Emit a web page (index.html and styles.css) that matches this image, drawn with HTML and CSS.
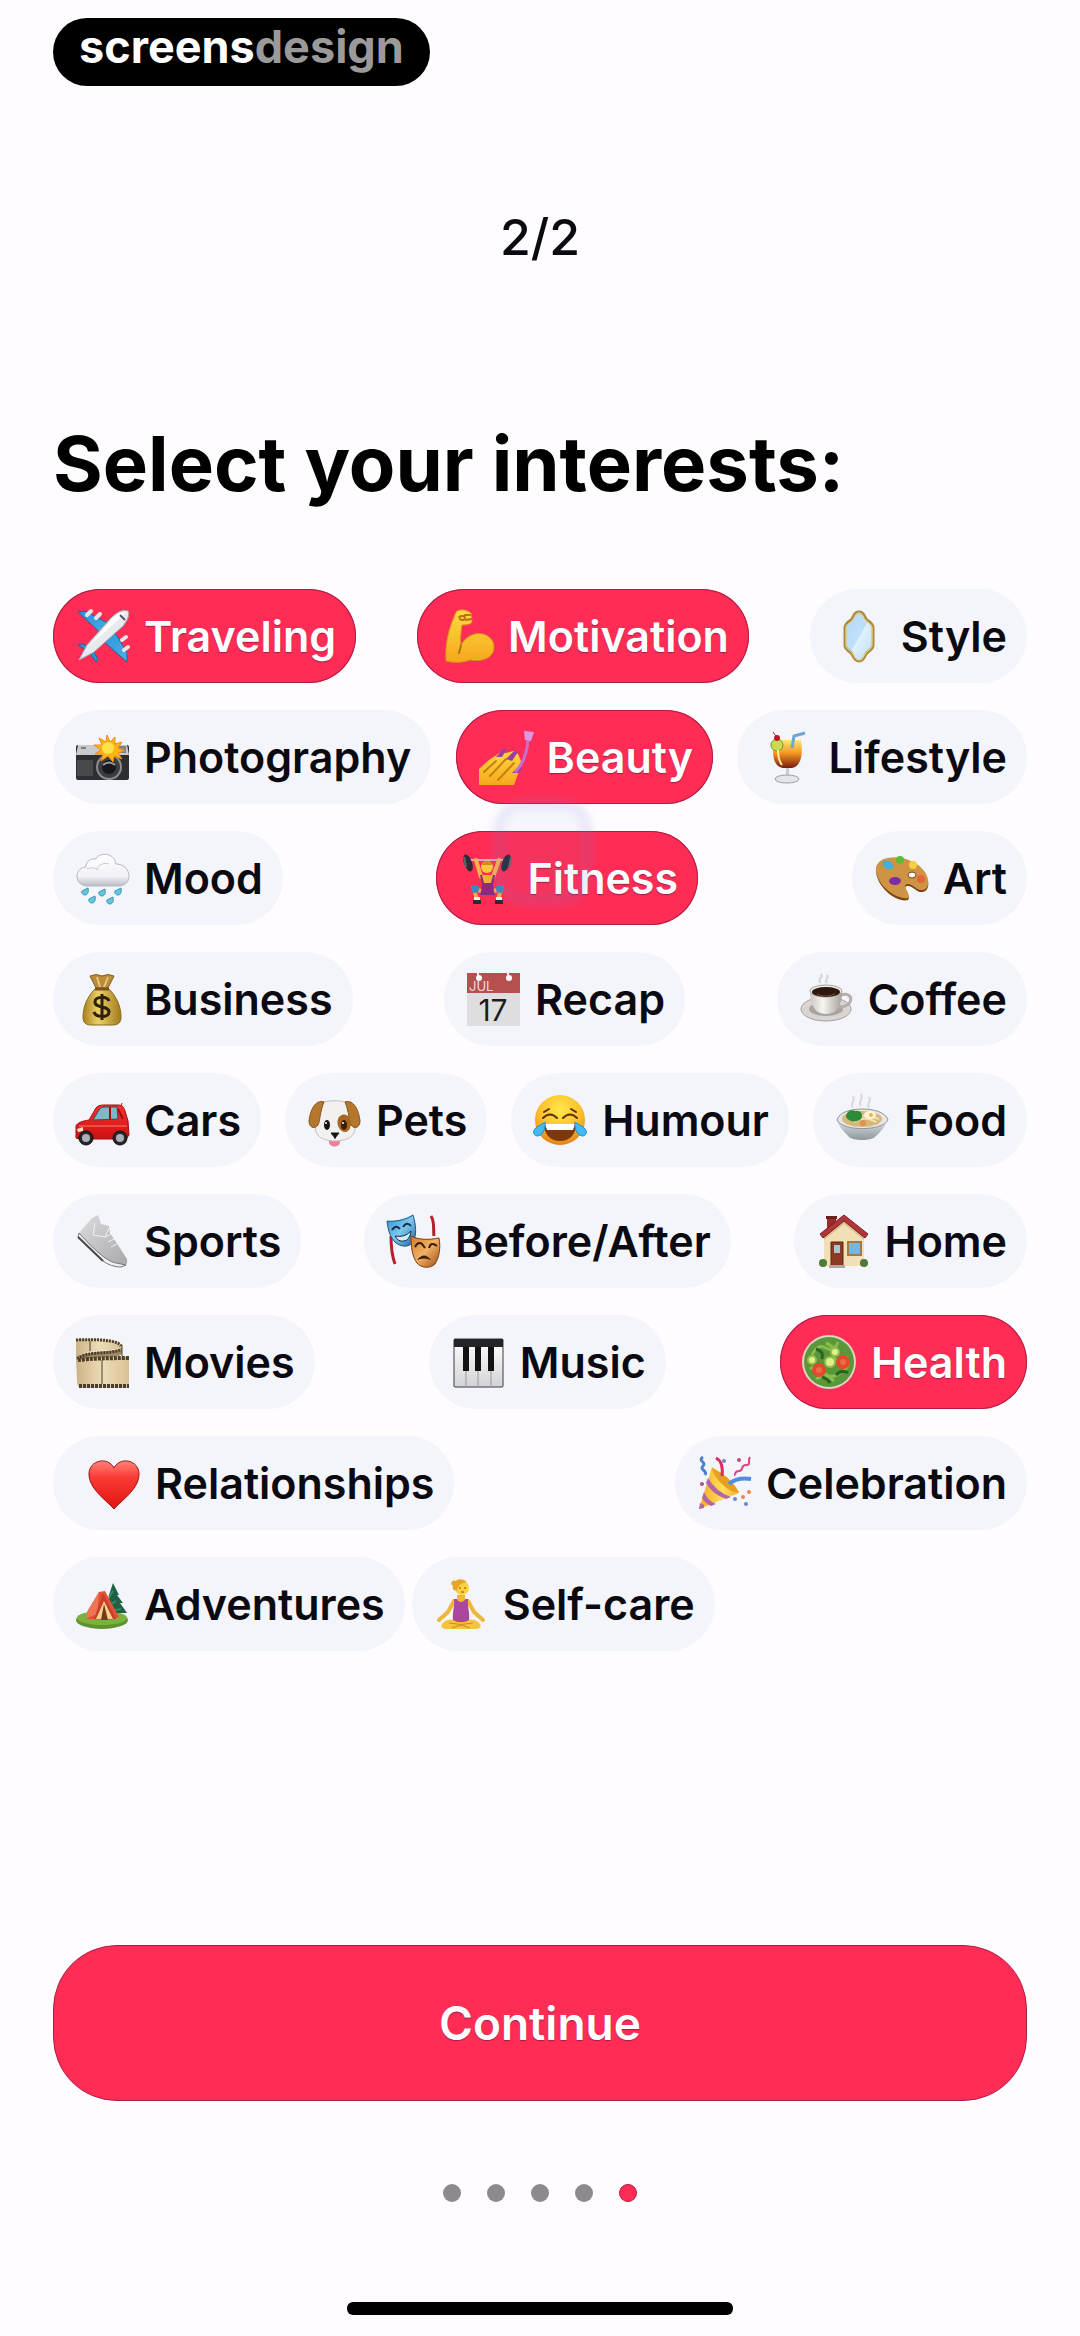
FILE: index.html
```html
<!DOCTYPE html>
<html lang="en">
<head>
<meta charset="utf-8">
<meta name="viewport" content="width=device-width, initial-scale=1">
<title>Select your interests</title>
<link rel="stylesheet" href="styles.css">
</head>
<body>
<svg class="defs" width="0" height="0" aria-hidden="true">
  <defs>
    <linearGradient id="skin" x1="0" y1="0" x2="0" y2="1"><stop offset="0" stop-color="#ffd93f"/><stop offset="1" stop-color="#f5a81c"/></linearGradient>
    <linearGradient id="blue" x1="0" y1="0" x2="1" y2="1"><stop offset="0" stop-color="#2f8fd0"/><stop offset="1" stop-color="#46b4ee"/></linearGradient>
    <linearGradient id="glass" x1="0" y1="0" x2="1" y2="1"><stop offset="0" stop-color="#b4d8f6"/><stop offset=".5" stop-color="#bfe0f9"/><stop offset=".52" stop-color="#e1f1fd"/><stop offset="1" stop-color="#b9dcf7"/></linearGradient>
    <linearGradient id="cloud" x1="0" y1="0" x2="0" y2="1"><stop offset="0" stop-color="#ffffff"/><stop offset=".7" stop-color="#f1f1f6"/><stop offset="1" stop-color="#b9bac6"/></linearGradient>
    <linearGradient id="drink" x1="0" y1="0" x2="0" y2="1"><stop offset="0" stop-color="#ffe873"/><stop offset=".45" stop-color="#f79a24"/><stop offset="1" stop-color="#7a1c10"/></linearGradient>
    <linearGradient id="gold" x1="0" y1="0" x2="1" y2="0"><stop offset="0" stop-color="#a8801f"/><stop offset=".4" stop-color="#ecd067"/><stop offset="1" stop-color="#a07a1c"/></linearGradient>
    <linearGradient id="china" x1="0" y1="0" x2="1" y2="0"><stop offset="0" stop-color="#c9c5c0"/><stop offset=".4" stop-color="#f7f5f2"/><stop offset="1" stop-color="#a5a09b"/></linearGradient>
    <linearGradient id="bowl" x1="0" y1="0" x2="0" y2="1"><stop offset="0" stop-color="#dadfe2"/><stop offset="1" stop-color="#8d979d"/></linearGradient>
    <linearGradient id="car" x1="0" y1="0" x2="0" y2="1"><stop offset="0" stop-color="#f4332f"/><stop offset="1" stop-color="#cf0f12"/></linearGradient>
    <radialGradient id="face" cx=".5" cy=".3" r=".7"><stop offset="0" stop-color="#ffe74a"/><stop offset=".6" stop-color="#fcc02a"/><stop offset="1" stop-color="#e2811a"/></radialGradient>
    <linearGradient id="shoe" x1="0" y1="0" x2="1" y2="1"><stop offset="0" stop-color="#dcdbdd"/><stop offset="1" stop-color="#a8a7a9"/></linearGradient>
    <linearGradient id="maskblue" x1="0" y1="0" x2="1" y2="1"><stop offset="0" stop-color="#2f8ed0"/><stop offset=".5" stop-color="#7cc8ee"/><stop offset="1" stop-color="#1d5f9c"/></linearGradient>
    <linearGradient id="maskgold" x1="0" y1="0" x2="1" y2="1"><stop offset="0" stop-color="#d07b2c"/><stop offset=".5" stop-color="#f1b165"/><stop offset="1" stop-color="#9a4a12"/></linearGradient>
    <linearGradient id="film" x1="0" y1="0" x2="1" y2="0"><stop offset="0" stop-color="#cdb285"/><stop offset=".5" stop-color="#eddcb8"/><stop offset="1" stop-color="#d9c193"/></linearGradient>
    <linearGradient id="heart" x1="0" y1="0" x2="0" y2="1"><stop offset="0" stop-color="#ff8477"/><stop offset=".35" stop-color="#fb3a34"/><stop offset="1" stop-color="#e0140f"/></linearGradient>
    <linearGradient id="keys" x1="0" y1="0" x2="0" y2="1"><stop offset="0" stop-color="#ffffff"/><stop offset="1" stop-color="#d3d3d5"/></linearGradient>
    <linearGradient id="cone" x1="0" y1="0" x2="1" y2="0"><stop offset="0" stop-color="#f4a728"/><stop offset=".6" stop-color="#ffe05a"/><stop offset="1" stop-color="#f0b12c"/></linearGradient>
  </defs>
</svg>

<header class="topbar">
  <div class="brand">screens<span class="brand-soft">design</span></div>
</header>

<main class="page">
  <p class="step">2/2</p>
  <h1 class="title">Select your interests:</h1>

  <div class="interests" role="group" aria-label="Interests">
    <div class="row">
      <button class="chip" type="button" aria-pressed="true">
        <svg class="icon" viewBox="0 0 54 54" aria-hidden="true">
          <path d="M3 3l7-1 26 14-6 12z" fill="url(#blue)" stroke="#20689b"/>
          <path d="M38 20l14 24 0 9-25-22z" fill="url(#blue)" stroke="#20689b"/>
          <path d="M3 36l4-1 12 4-4 5zM16 38l7 12-2 3-7-10z" fill="#2f8fd0" stroke="#20689b"/>
          <path d="M12 6l4-4M21 9l4-4M47 31l4-3M49 41l4-3" stroke="#e4e6ea" stroke-width="4" stroke-linecap="round"/>
          <path d="M53 2c2 4-1 10-5 15L19 43 4 51l8-15L36 9c6-6 12-9 17-7z" fill="#e9eaee" stroke="#a6a9b0"/>
          <path d="M50 4c-5-1-10 3-14 7L15 36 40 14z" fill="#fff"/>
          <path d="M45 6l5 5" stroke="#4f565f" stroke-width="2"/>
        </svg>
        <span>Traveling</span>
      </button>
      <button class="chip" type="button" aria-pressed="true">
        <svg class="icon" viewBox="0 0 54 54" aria-hidden="true">
          <path d="M7 52C6 36 9 24 13 13l4-10c3-3 10-3 15 1l1 9c-1 3-8 3-10 3-1 8-2 14-1 20 5-9 14-13 22-11 8 2 11 8 11 13 0 12-14 15-24 13-8 3-17 3-24 1z" fill="url(#skin)" stroke="#d98d16"/>
          <path d="M22 36c-1 4-1 5-2 8M20 8c3-2 6-1 6 1s-3 3-5 1M31 6l-5 0M32 10l-5 1" fill="none" stroke="#b87012" stroke-width="2" stroke-linecap="round"/>
        </svg>
        <span>Motivation</span>
      </button>
      <button class="chip" type="button" aria-pressed="false">
        <svg class="icon" viewBox="0 0 54 54" aria-hidden="true">
          <path d="M27 3c5 0 5 4 7 7 3 3 7 4 7 9v17c0 5-4 5-7 9-2 3-2 7-7 7s-5-4-7-7c-3-4-7-4-7-9V19c0-5 4-6 7-9 2-3 2-7 7-7z" fill="url(#glass)" stroke="#a98c3c" stroke-width="3"/>
          <path d="M27 4c4 0 4 4 6 7 3 3 7 4 7 8v17c0 4-4 5-7 9-2 3-2 6-6 6s-4-3-6-6c-3-4-7-5-7-9V19c0-4 4-5 7-8 2-3 2-7 6-7z" fill="none" stroke="#f7e29a" stroke-width="1"/>
        </svg>
        <span>Style</span>
      </button>
    </div>

    <div class="row">
      <button class="chip" type="button" aria-pressed="false">
        <svg class="icon" viewBox="0 0 54 54" aria-hidden="true">
          <rect x="1" y="15" width="53" height="35" rx="2" fill="#2d2e31"/>
          <path d="M3 15h49l2 10H1z" fill="#c9cacc"/>
          <path d="M6 18h5M42 17h8v5h-8z" stroke="#7d7f83" stroke-width="2" fill="#8e9094"/>
          <path d="M2 30h16v16H2z" fill="#47494d"/>
          <circle cx="34" cy="37" r="13" fill="#8b8d91"/><circle cx="34" cy="37" r="11" fill="#3a3c40"/><circle cx="34" cy="37" r="7" fill="#17181b"/>
          <path d="M28 35q6-5 12 0" stroke="#9a9ca0" stroke-width="2" fill="none"/>
          <path d="M32 5l3 7 5-5 0 7 7-2-4 6 7 3-7 2 4 6-8-3-1 6-5-6-7 5 2-7-8 0 6-4-7-5 8 0-3-7 7 4z" fill="#fbb416" stroke="#ef8a12"/>
          <circle cx="33" cy="18" r="6" fill="#ffe14a"/>
        </svg>
        <span>Photography</span>
      </button>
      <button class="chip" type="button" aria-pressed="true">
        <svg class="icon" viewBox="0 0 54 54" aria-hidden="true">
          <path d="M1 39l10-9 12-8 5 1 8-2 4 3 3 7-2 10-5 14H1z" fill="url(#skin)"/>
          <path d="M6 42l12-11M12 46l16-17M20 50l16-17" stroke="#c97d13" stroke-width="2" stroke-linecap="round"/>
          <path d="M18 27l7-8 4 0-5 8zM28 29l8-8 4 1-6 9zM34 43l5-5 6-1-4 6z" fill="#9b3fa0"/>
          <path d="M50 10c-1 12-5 24-12 31" stroke="#c66fd0" stroke-width="3" fill="none" stroke-linecap="round"/>
          <path d="M46 1l10 1-3 9-6-1z" fill="#dd98e4"/>
        </svg>
        <span>Beauty</span>
      </button>
      <button class="chip" type="button" aria-pressed="false">
        <svg class="icon" viewBox="0 0 54 54" aria-hidden="true">
          <path d="M15 10h27c2 12 1 26-9 28h-9C13 36 13 22 15 10z" fill="url(#drink)"/>
          <path d="M33 18l2-12 11-3" stroke="#6fa6cf" stroke-width="3" fill="none"/>
          <circle cx="18" cy="15" r="6" fill="#cadb52" stroke="#6f9b2a"/>
          <path d="M14 2l5 7" stroke="#8a4b20" stroke-width="1"/><circle cx="18" cy="8" r="3" fill="#c21424"/>
          <path d="M27 38h3v8h-3z" fill="#c9cdd1"/><ellipse cx="28" cy="49" rx="12" ry="4" fill="#e3e5e8" stroke="#9b9fa5"/>
          <path d="M19 20q0 10 4 15" stroke="#ffe9a0" stroke-width="2" fill="none"/>
        </svg>
        <span>Lifestyle</span>
      </button>
    </div>

    <div class="row">
      <button class="chip" type="button" aria-pressed="false">
        <svg class="icon" viewBox="0 0 54 54" aria-hidden="true">
          <path d="M13 35C6 35 2 31 2 25c0-5 4-9 9-9 0-6 5-9 10-8 3-7 18-7 20 5 8 0 13 6 13 12s-4 10-11 10z" fill="url(#cloud)" stroke="#b7b8c2"/>
          <path d="M22 18c2-4 7-7 12-5M12 18c4-2 9-1 11 1" stroke="#c9cad2" fill="none"/>
          <g fill="#63c6dc" stroke="#3a98b2"><path d="M13 37c1 5-1 7-3 7s-4-2-3-4zM30 38c1 5-1 7-3 7s-4-2-3-4zM46 37c1 5-1 7-3 7s-4-2-3-4zM20 45c1 5-1 7-3 7s-4-2-3-4zM38 46c1 5-1 7-3 7s-4-2-3-4z"/></g>
        </svg>
        <span>Mood</span>
      </button>
      <button class="chip chip-touched" type="button" aria-pressed="true">
        <svg class="icon" viewBox="0 0 54 54" aria-hidden="true">
          <path d="M8 9h40" stroke="#d6a9c0" stroke-width="2"/>
          <g fill="#2b2c35"><ellipse cx="10" cy="12" rx="4" ry="9" transform="rotate(-20 10 12)"/><ellipse cx="48" cy="12" rx="4" ry="9" transform="rotate(20 48 12)"/></g>
          <path d="M6 6l2 10M53 6l-2 10" stroke="#5d6472" stroke-width="2"/>
          <path d="M18 9l5 17M41 9l-6 17" stroke="#f4b64a" stroke-width="4" stroke-linecap="round"/>
          <circle cx="29" cy="16" r="6" fill="#ffc93a"/><path d="M23 14q6-8 12 0z" fill="#d48b1c"/>
          <path d="M22 24h15l-2 10 2 10H22l2-10z" fill="#8b2a7e"/><path d="M24 24h11l-2 8h-7z" fill="#f5b02c"/>
          <path d="M23 40l-7-2 3 11M36 40l7-2-3 11" stroke="#edae45" stroke-width="4" fill="none"/>
          <circle cx="17" cy="38" r="4" fill="#4286b8"/><circle cx="42" cy="38" r="4" fill="#4286b8"/>
          <path d="M16 46h6v3h-6zM38 46h6v3h-6z" fill="#f1ede9"/><path d="M15 49h8v4h-8zM37 49h8v4h-8z" fill="#292b38"/>
        </svg>
        <span>Fitness</span>
        <i class="touch"></i>
      </button>
      <button class="chip" type="button" aria-pressed="false">
        <svg class="icon" viewBox="0 0 54 54" aria-hidden="true">
          <path d="M14 8c14-3 30 4 37 15 6 10 3 17-2 18-7 1-10-7-16-6-6 2 5 10 1 14C23 52 3 37 2 20 2 13 7 9 14 8z" fill="#7a4513"/>
          <path d="M14 7c14-3 30 4 37 14 6 10 3 17-2 18-7 1-10-7-16-6-6 2 5 10 1 14C23 49 3 35 2 19 2 12 7 8 14 7z" fill="#cf9443"/>
          <ellipse cx="38" cy="24" rx="4" ry="3" fill="#fffdf8" stroke="#7a4513"/>
          <ellipse cx="14" cy="14" rx="6" ry="4" fill="#46b0d2" transform="rotate(30 14 14)"/><circle cx="26" cy="9" r="4" fill="#5dbb35"/><circle cx="39" cy="14" r="4" fill="#f7cf3c"/><circle cx="47" cy="28" r="4" fill="#e3643c"/><ellipse cx="21" cy="30" rx="6" ry="4" fill="#7b2ca8"/>
        </svg>
        <span>Art</span>
      </button>
    </div>

    <div class="row">
      <button class="chip" type="button" aria-pressed="false">
        <svg class="icon" viewBox="0 0 54 54" aria-hidden="true">
          <path d="M15 4q6-3 12 0 6-3 12 0l-6 12H21z" fill="#b98b3a" stroke="#86601f"/><path d="M22 5l3 10M33 5l-4 10" stroke="#e9c77a" stroke-width="2"/>
          <path d="M20 17h14c8 8 12 18 12 28 0 6-3 8-9 8H17c-6 0-9-2-9-8 0-10 4-20 12-28z" fill="url(#gold)" stroke="#8b6b1e"/>
          <path d="M20 17h14" stroke="#7c541a" stroke-width="3"/>
          <path d="M34 29c-2-5-14-5-14 1 0 7 14 3 14 10 0 6-13 6-15 0M27 22v26" stroke="#2c210c" stroke-width="3" fill="none"/>
        </svg>
        <span>Business</span>
      </button>
      <button class="chip" type="button" aria-pressed="false">
        <svg class="icon" viewBox="0 0 54 54" aria-hidden="true">
          <path d="M1 1h53v53H1z" fill="#dedee0"/><path d="M1 1h53v20H1z" fill="#b5504f"/>
          <path d="M12 0v5M42 0v5" stroke="#f7f1f2" stroke-width="2"/><circle cx="13" cy="6" r="3" fill="#fff"/><circle cx="43" cy="6" r="3" fill="#fff"/>
          <text class="cal-month" x="3" y="19">JUL</text><text class="cal-day" x="27" y="49" text-anchor="middle">17</text>
        </svg>
        <span>Recap</span>
      </button>
      <button class="chip" type="button" aria-pressed="false">
        <svg class="icon" viewBox="0 0 54 54" aria-hidden="true">
          <path d="M22 11c-5-4 3-5 0-9M28 11c-4-4 3-4 0-8" stroke="#d3d3dc" stroke-width="2" fill="none"/>
          <ellipse cx="27" cy="37" rx="25" ry="12" fill="#d8d5d2" stroke="#a5a09b"/><ellipse cx="27" cy="37" rx="17" ry="7" fill="#a9a4a0"/>
          <path d="M42 23c14-4 13 13-3 12" stroke="#b4afaa" stroke-width="3" fill="none"/>
          <path d="M11 19c0 14 5 23 16 23s16-9 16-23z" fill="url(#china)"/>
          <ellipse cx="27" cy="19" rx="16" ry="6" fill="#efece8" stroke="#a8a29c"/><ellipse cx="27" cy="20" rx="14" ry="5" fill="#2e1911"/><path d="M18 22q8 4 18 0" stroke="#7a4e35" fill="none"/>
        </svg>
        <span>Coffee</span>
      </button>
    </div>

    <div class="row">
      <button class="chip" type="button" aria-pressed="false">
        <svg class="icon" viewBox="0 0 54 54" aria-hidden="true">
          <path d="M46 14l1-4" stroke="#c01214" stroke-width="1"/>
          <path d="M1 45V33c1-3 6-5 13-6l7-12c1-2 4-3 8-3h14c4 0 6 2 7 6l3 10 1 14-3 4H4z" fill="url(#car)" stroke="#a60c0e"/>
          <path d="M18 27l6-10c1-2 3-3 6-3h12l1 12z" fill="#7fb7c6" stroke="#33525b"/><path d="M35 14v13M43 16l5 10" stroke="#a60c0e" stroke-width="2"/>
          <path d="M4 33h48" stroke="#ff7d70"/><path d="M2 36l6-2v4l-5 1z" fill="#f3e3c4"/>
          <g fill="#26272b" stroke="#111"><circle cx="11" cy="45" r="7"/><circle cx="45" cy="45" r="7"/></g><g fill="#aab0b5"><circle cx="11" cy="45" r="4"/><circle cx="45" cy="45" r="4"/></g>
        </svg>
        <span>Cars</span>
      </button>
      <button class="chip" type="button" aria-pressed="false">
        <svg class="icon" viewBox="0 0 54 54" aria-hidden="true">
          <path d="M22 44h11v5c0 6-11 6-11 0z" fill="#f07f9c"/>
          <path d="M14 10c7-3 20-3 28 0l6 22c2 12-10 16-20 16S6 44 9 32z" fill="#f3f1ef" stroke="#c4bfba"/>
          <path d="M17 9C8 6 3 18 2 28c0 6 5 9 9 4 2-3 2-14 6-23zM38 9c9-3 14 9 15 19 0 6-5 9-9 4-2-3-2-14-6-23z" fill="#b5762e" stroke="#8a541b"/>
          <path d="M31 26c2-6 10-6 12 0s0 13-5 13-9-7-7-13z" fill="#a8671e"/>
          <ellipse cx="20" cy="32" rx="3" ry="5" fill="#1c1310"/><ellipse cx="37" cy="32" rx="3" ry="5" fill="#3a1d0a"/><circle cx="19" cy="30" r="1" fill="#fff"/><circle cx="36" cy="30" r="1" fill="#fff"/>
          <path d="M24 40h8l-4 5zM28 43v3" fill="#171312" stroke="#171312"/>
        </svg>
        <span>Pets</span>
      </button>
      <button class="chip" type="button" aria-pressed="false">
        <svg class="icon" viewBox="0 0 54 54" aria-hidden="true">
          <circle cx="27" cy="27" r="25" fill="url(#face)"/>
          <path d="M10 25q7-7 14 0M30 25q7-7 14 0M11 19l5-3M43 19l-5-3" stroke="#59300a" stroke-width="2" fill="none" stroke-linecap="round"/>
          <path d="M11 31h32c0 11-7 17-16 17s-16-6-16-17z" fill="#7c370c"/><path d="M12 31h30l-2 6H14z" fill="#fff"/>
          <path d="M12 29c1 8-3 14-8 14-5-1-4-7 0-9zM42 29c-1 8 3 14 8 14 5-1 4-7 0-9z" fill="#42b9f3" stroke="#268fcf"/>
        </svg>
        <span>Humour</span>
      </button>
      <button class="chip" type="button" aria-pressed="false">
        <svg class="icon" viewBox="0 0 54 54" aria-hidden="true">
          <path d="M18 15c-4-5 3-6 0-12M26 13c-4-4 3-6 0-12M34 15c-3-5 3-6 0-11" stroke="#d8d8dd" stroke-width="2" fill="none"/>
          <path d="M2 28c3 8 9 12 12 16 4 4 22 4 26 0 4-4 9-8 12-16z" fill="url(#bowl)"/>
          <path d="M2 27c2-8 14-11 25-11s24 3 26 11c-5 11-45 12-51 0z" fill="#e5e5e2" stroke="#8f969a"/>
          <ellipse cx="27" cy="26" rx="20" ry="8" fill="#d8b77a"/><path d="M19 29q10-7 22 0M16 25q14-5 28 1" stroke="#f1e1b6" stroke-width="2" fill="none"/>
          <path d="M11 24c0-5 5-8 9-6 6-1 9 4 6 8-5 4-12 3-15-2z" fill="#2b8b36"/><ellipse cx="35" cy="22" rx="6" ry="4" fill="#fff4d8"/><circle cx="36" cy="22" r="2" fill="#f1b42f"/><circle cx="28" cy="30" r="3" fill="#e2924f"/>
        </svg>
        <span>Food</span>
      </button>
    </div>

    <div class="row">
      <button class="chip" type="button" aria-pressed="false">
        <svg class="icon" viewBox="0 0 54 54" aria-hidden="true">
          <path d="M4 19L17 4l6-3 3 9 8 2 1 7 10 15 7 11c1 6-2 8-8 7L30 46 10 28z" fill="url(#shoe)"/>
          <path d="M4 19l-1 4 25 24c5 4 12 6 18 6l5-2-10-2C30 47 16 32 4 19z" fill="#f0f0f0" stroke="#77777a"/>
          <path d="M20 9l-2 12 12 2 4-9M36 20l-6 3M39 25l-6 3M42 30l-6 3" stroke="#f0f0f1" stroke-width="1" fill="none"/>
          <path d="M3 23l25 24" stroke="#47474a" stroke-width="2"/>
        </svg>
        <span>Sports</span>
      </button>
      <button class="chip" type="button" aria-pressed="false">
        <svg class="icon" viewBox="0 0 54 54" aria-hidden="true">
          <path d="M5 22c0 10 1 20 4 28M45 2c4 6 2 14 3 20" stroke="#b3202a" stroke-width="3" fill="none"/>
          <path d="M1 7c8 1 18-1 26-6 3 10 4 20 0 27-4 6-13 5-18 0C4 23 2 16 1 7z" fill="url(#maskblue)" stroke="#1b5788"/>
          <path d="M6 16q4-6 8-1M17 13q4-6 8-1" stroke="#132d49" stroke-width="2" fill="none"/><path d="M9 22q10 2 16-5-1 9-7 10-6 1-9-5z" fill="#d8ecf7" stroke="#15324f"/>
          <path d="M25 22c8 4 18 4 28 2 2 10 0 20-4 26-5 5-14 4-18-1-5-7-6-16-6-27z" fill="url(#maskgold)" stroke="#7e3d0e"/>
          <path d="M29 33q3-6 7-3l3 4M43 34q2-7 8-2" stroke="#3b1a06" stroke-width="2" fill="none"/><path d="M31 46q7-9 14 0-7-3-14 0z" fill="#451d08"/>
        </svg>
        <span>Before/After</span>
      </button>
      <button class="chip" type="button" aria-pressed="false">
        <svg class="icon" viewBox="0 0 54 54" aria-hidden="true">
          <path d="M11 2h9v16h-9z" fill="#9c2c2c"/><path d="M10 2h11v3H10z" fill="#6e1d1d"/>
          <path d="M8 22L28 5l20 17v30H8z" fill="#f3dfb5"/><path d="M8 22L28 6l20 16v4L28 10 8 26z" fill="#d9bf8e"/>
          <path d="M4 20L28 1l24 19-3 4L28 7 7 24z" fill="#b2353a" stroke="#7c1f24"/>
          <path d="M15 28h12v24H15z" fill="#8a3b23" stroke="#5f2413"/><path d="M18 31h6v8h-6z" fill="#a9c4d2"/>
          <path d="M32 28h13v13H32z" fill="#74b6e0" stroke="#a07a48" stroke-width="2"/><path d="M13 51h16v3H13z" fill="#b3a899"/>
          <g fill="#4f7a33"><circle cx="7" cy="49" r="4"/><circle cx="48" cy="49" r="4"/></g>
        </svg>
        <span>Home</span>
      </button>
    </div>

    <div class="row">
      <button class="chip" type="button" aria-pressed="false">
        <svg class="icon" viewBox="0 0 54 54" aria-hidden="true">
          <path d="M1 4c22-1 46 0 46 8 0 5-46 1-46 13z" fill="url(#film)"/>
          <path d="M47 11c0 7-30 4-42 9-5 2-4 6-3 8 12-5 45-4 45-10z" fill="#a08a60"/>
          <path d="M1 25c3-1 20-3 53-3v31H6c-3-1-4-4-4-8z" fill="url(#film)"/>
          <path d="M1 5c22-1 42 0 45 6" stroke="#4a3f2a" stroke-width="3" stroke-dasharray="2 1" fill="none"/>
          <path d="M45 15c-8 4-34 1-43 9" stroke="#4a3f2a" stroke-width="3" stroke-dasharray="2 1" fill="none"/>
          <path d="M3 25q20-2 51-2M4 51h50" stroke="#4a3f2a" stroke-width="4" stroke-dasharray="3 1" fill="none"/>
          <path d="M27 25v24M15 6v10M47 10v11" stroke="#4a3e28" stroke-width="1"/>
        </svg>
        <span>Movies</span>
      </button>
      <button class="chip" type="button" aria-pressed="false">
        <svg class="icon" viewBox="0 0 54 54" aria-hidden="true">
          <rect x="3" y="4" width="49" height="48" rx="1" fill="url(#keys)" stroke="#3b3c40" stroke-width="1"/>
          <path d="M3 4h49v8H3z" fill="#232427"/><path d="M15 12v40M27 12v40M40 12v40" stroke="#98999d" stroke-width="1"/>
          <path d="M12 12h6v24h-6zM24 12h6v24h-6zM37 12h6v24h-6z" fill="#121315"/>
        </svg>
        <span>Music</span>
      </button>
      <button class="chip" type="button" aria-pressed="true">
        <svg class="icon" viewBox="0 0 54 54" aria-hidden="true">
          <circle cx="27" cy="27" r="27" fill="#d9d6c2"/><circle cx="27" cy="27" r="25" fill="#5a963a"/>
          <path d="M10 20q6-12 14-7t12-6M8 34q8-6 13 2t14 4 12-12M14 44q10-6 18 2M24 8q10 4 8 12t14 2" stroke="#88bd4d" stroke-width="3" fill="none"/><path d="M14 14q8 2 6 10M34 40q6-6 12-2M20 42q6 2 8 6" stroke="#2b6323" stroke-width="3" fill="none"/>
          <g fill="#e2f08a" stroke="#8fbf4c" stroke-width="2"><circle cx="10" cy="25" r="4"/><circle cx="28" cy="27" r="5"/><circle cx="33" cy="17" r="4"/></g>
          <g fill="#e04a2f"><circle cx="17" cy="35" r="7"/><circle cx="41" cy="27" r="7"/></g><g fill="#f06a45"><circle cx="17" cy="35" r="3"/><circle cx="41" cy="27" r="3"/></g>
        </svg>
        <span>Health</span>
      </button>
    </div>

    <div class="row">
      <button class="chip chip-indent" type="button" aria-pressed="false">
        <svg class="icon" viewBox="0 0 54 54" aria-hidden="true">
          <path d="M28 53C20 44 3 33 3 18 3 4 22 0 28 12 34 0 53 4 53 18c0 15-17 26-25 35z" fill="url(#heart)" stroke="#9c1210"/>
        </svg>
        <span>Relationships</span>
      </button>
      <button class="chip" type="button" aria-pressed="false">
        <svg class="icon" viewBox="0 0 54 54" aria-hidden="true">
          <path d="M2 53L15 11c8 4 21 15 27 26z" fill="url(#cone)"/>
          <path d="M15 12q18 8 27 24-6 2-16-7T15 12z" fill="#e5a022"/>
          <path d="M11 22q8 14 23 19l-5 2Q15 38 9 27zM7 36q4 9 12 12l-5 2Q9 48 5 42zM2 53l5-1 0-3-4-2z" fill="#b465a6"/>
          <path d="M6 1c-6 4 4 5 0 9s5 4 2 9" stroke="#4c7fd0" stroke-width="3" fill="none"/><path d="M53 1c-3 4 2 8-4 8s-2 6-7 6-3 4-5 4" stroke="#e0417d" stroke-width="2" fill="none"/>
          <path d="M19 2c6 3 7 10 6 18" stroke="#d92f5d" stroke-width="3" fill="none"/><path d="M32 28q8-7 22-5" stroke="#4e8de0" stroke-width="4" fill="none"/>
          <g fill="#6d83ce"><circle cx="27" cy="5" r="2"/><circle cx="38" cy="43" r="2"/><circle cx="49" cy="48" r="2"/></g><g fill="#e88a53"><circle cx="46" cy="41" r="2"/><circle cx="52" cy="36" r="2"/></g><g fill="#b04a93"><circle cx="5" cy="28" r="2"/><circle cx="42" cy="4" r="2"/></g>
        </svg>
        <span>Celebration</span>
      </button>
    </div>

    <div class="row row-start">
      <button class="chip" type="button" aria-pressed="false">
        <svg class="icon" viewBox="0 0 54 54" aria-hidden="true">
          <ellipse cx="27" cy="43" rx="26" ry="9" fill="#5d9231"/><ellipse cx="27" cy="41" rx="25" ry="7" fill="#7bb13d"/>
          <path d="M38 6l6 12-2 0 6 8-3 0 7 10H28l6-10-3 0 5-8-2 0z" fill="#1e6144"/><path d="M38 14l-4 6M41 24l-6 4M46 32l-6 1" stroke="#348a62" stroke-width="2"/>
          <path d="M12 35l12-20 6-1 14 26-8 3-24-1z" fill="#e0523a"/><path d="M12 35l12-20-2 22-10 4z" fill="#f07557"/><path d="M28 16l13 26H19z" fill="#ca3d2a"/><path d="M29 24l9 18H21z" fill="#f5d28a"/><path d="M29 27l4 16h-7z" fill="#7a3420"/>
        </svg>
        <span>Adventures</span>
      </button>
      <button class="chip" type="button" aria-pressed="false">
        <svg class="icon" viewBox="0 0 54 54" aria-hidden="true">
          <path d="M20 24l-6 11-9 8M34 24l6 11 9 8" stroke="#f0b63a" stroke-width="4" stroke-linecap="round" fill="none"/>
          <path d="M8 47c5-6 12-5 19-2 7-3 14-4 19 2 2 3-1 5-5 5H13c-4 0-7-2-5-5z" fill="#f6c33d"/><path d="M15 46q10 0 21 5M39 46q-10 0-21 5" stroke="#cd8c1d" stroke-width="1" fill="none"/>
          <path d="M20 22h14c-1 7 2 13 1 21-5 3-11 3-16 0-1-8 2-14 1-21z" fill="#a9479c"/><path d="M23 18h8v5q-4 4-8 0z" fill="#f0b63a"/>
          <circle cx="28" cy="11" r="7" fill="#ffd03f"/><path d="M19 9c-4-3 0-7 3-5 2-3 8-2 11 1-6 1-9 3-10 9-4-1-5-2-4-5z" fill="#e4a529"/><path d="M25 11h2M30 11h2M27 15h3" stroke="#805010"/>
        </svg>
        <span>Self-care</span>
      </button>
    </div>
  </div>
</main>

<footer class="footer">
  <button class="continue" type="button">Continue</button>
  <div class="dots" role="img" aria-label="Page 5 of 5">
    <i class="dot"></i><i class="dot"></i><i class="dot"></i><i class="dot"></i><i class="dot dot-on"></i>
  </div>
  <div class="home-bar"></div>
</footer>
</body>
</html>
```

FILE: styles.css
```css
* {
  box-sizing: border-box;
}

body {
  margin: 0;
  min-height: 100vh;
  display: flex;
  flex-direction: column;
  padding: 18px 53px 21px;
  background: #fefcfe;
  color: #0a0a10;
  font-family: Inter, "Liberation Sans", sans-serif;
}

.defs {
  position: absolute;
}

.topbar {
  display: flex;
}

.brand {
  height: 68px;
  padding: 0 26px;
  border-radius: 34px;
  background: #000;
  color: #fff;
  font-size: 45px;
  font-weight: 700;
  line-height: 58px;
}

.brand-soft {
  color: #9a9a9a;
}

.step {
  margin: 119px 0 0;
  text-align: center;
  font-size: 50px;
  font-weight: 500;
  line-height: 64px;
}

.title {
  margin: 148px 0 0;
  font-size: 76px;
  font-weight: 700;
  line-height: 92px;
  color: #000;
}

.interests {
  display: flex;
  flex-direction: column;
  gap: 27px;
  margin-top: 80px;
}

.row {
  display: flex;
  justify-content: space-between;
}

.row-start {
  justify-content: flex-start;
  gap: 7px;
}

.chip {
  display: flex;
  align-items: center;
  gap: 15px;
  height: 94px;
  padding: 0 20px 0 22px;
  border: 0;
  border-radius: 47px;
  background: #f4f4fb;
  color: inherit;
  font-family: inherit;
  font-size: 43px;
  font-weight: 600;
  line-height: 52px;
  white-space: nowrap;
}

.chip[aria-pressed="true"] {
  background: #ff2d55;
  color: #fff;
  box-shadow: inset 0 0 0 1px #b01c45;
  text-shadow: 0 1px 1px #a01c46;
}

.chip-indent {
  padding-left: 33px;
}

.chip-touched {
  position: relative;
}

/* Fading touch marker over the last tapped chip */
.touch {
  position: absolute;
  left: 58px;
  top: -32px;
  width: 98px;
  height: 106px;
  border: 10px solid rgba(110, 130, 220, 0.12);
  border-radius: 30px;
  background: rgba(110, 130, 220, 0.06);
  filter: blur(4px);
}

.icon {
  flex: none;
  width: 54px;
  height: 54px;
  overflow: visible;
}

.cal-month {
  font-size: 13px;
  font-weight: 400;
  fill: #f3dcdc;
}

.cal-day {
  font-size: 30px;
  font-weight: 400;
  fill: #1d1d20;
}

.footer {
  display: flex;
  flex-direction: column;
  align-items: center;
  margin-top: auto;
}

.continue {
  width: 100%;
  height: 156px;
  padding: 0;
  border: 1px solid #b01c45;
  border-radius: 64px;
  background: #ff2d55;
  color: #fff;
  font-family: inherit;
  font-size: 46px;
  font-weight: 600;
  line-height: 56px;
  text-shadow: 0 1px 1px #a01c46;
}

.dots {
  display: flex;
  gap: 26px;
  margin-top: 83px;
}

.dot {
  width: 18px;
  height: 18px;
  border-radius: 50%;
  background: #8c8a8f;
}

.dot-on {
  border: 1px solid #b01c45;
  background: #ff2d55;
}

.home-bar {
  width: 386px;
  height: 13px;
  margin-top: 100px;
  border-radius: 6px;
  background: #000;
}
```
